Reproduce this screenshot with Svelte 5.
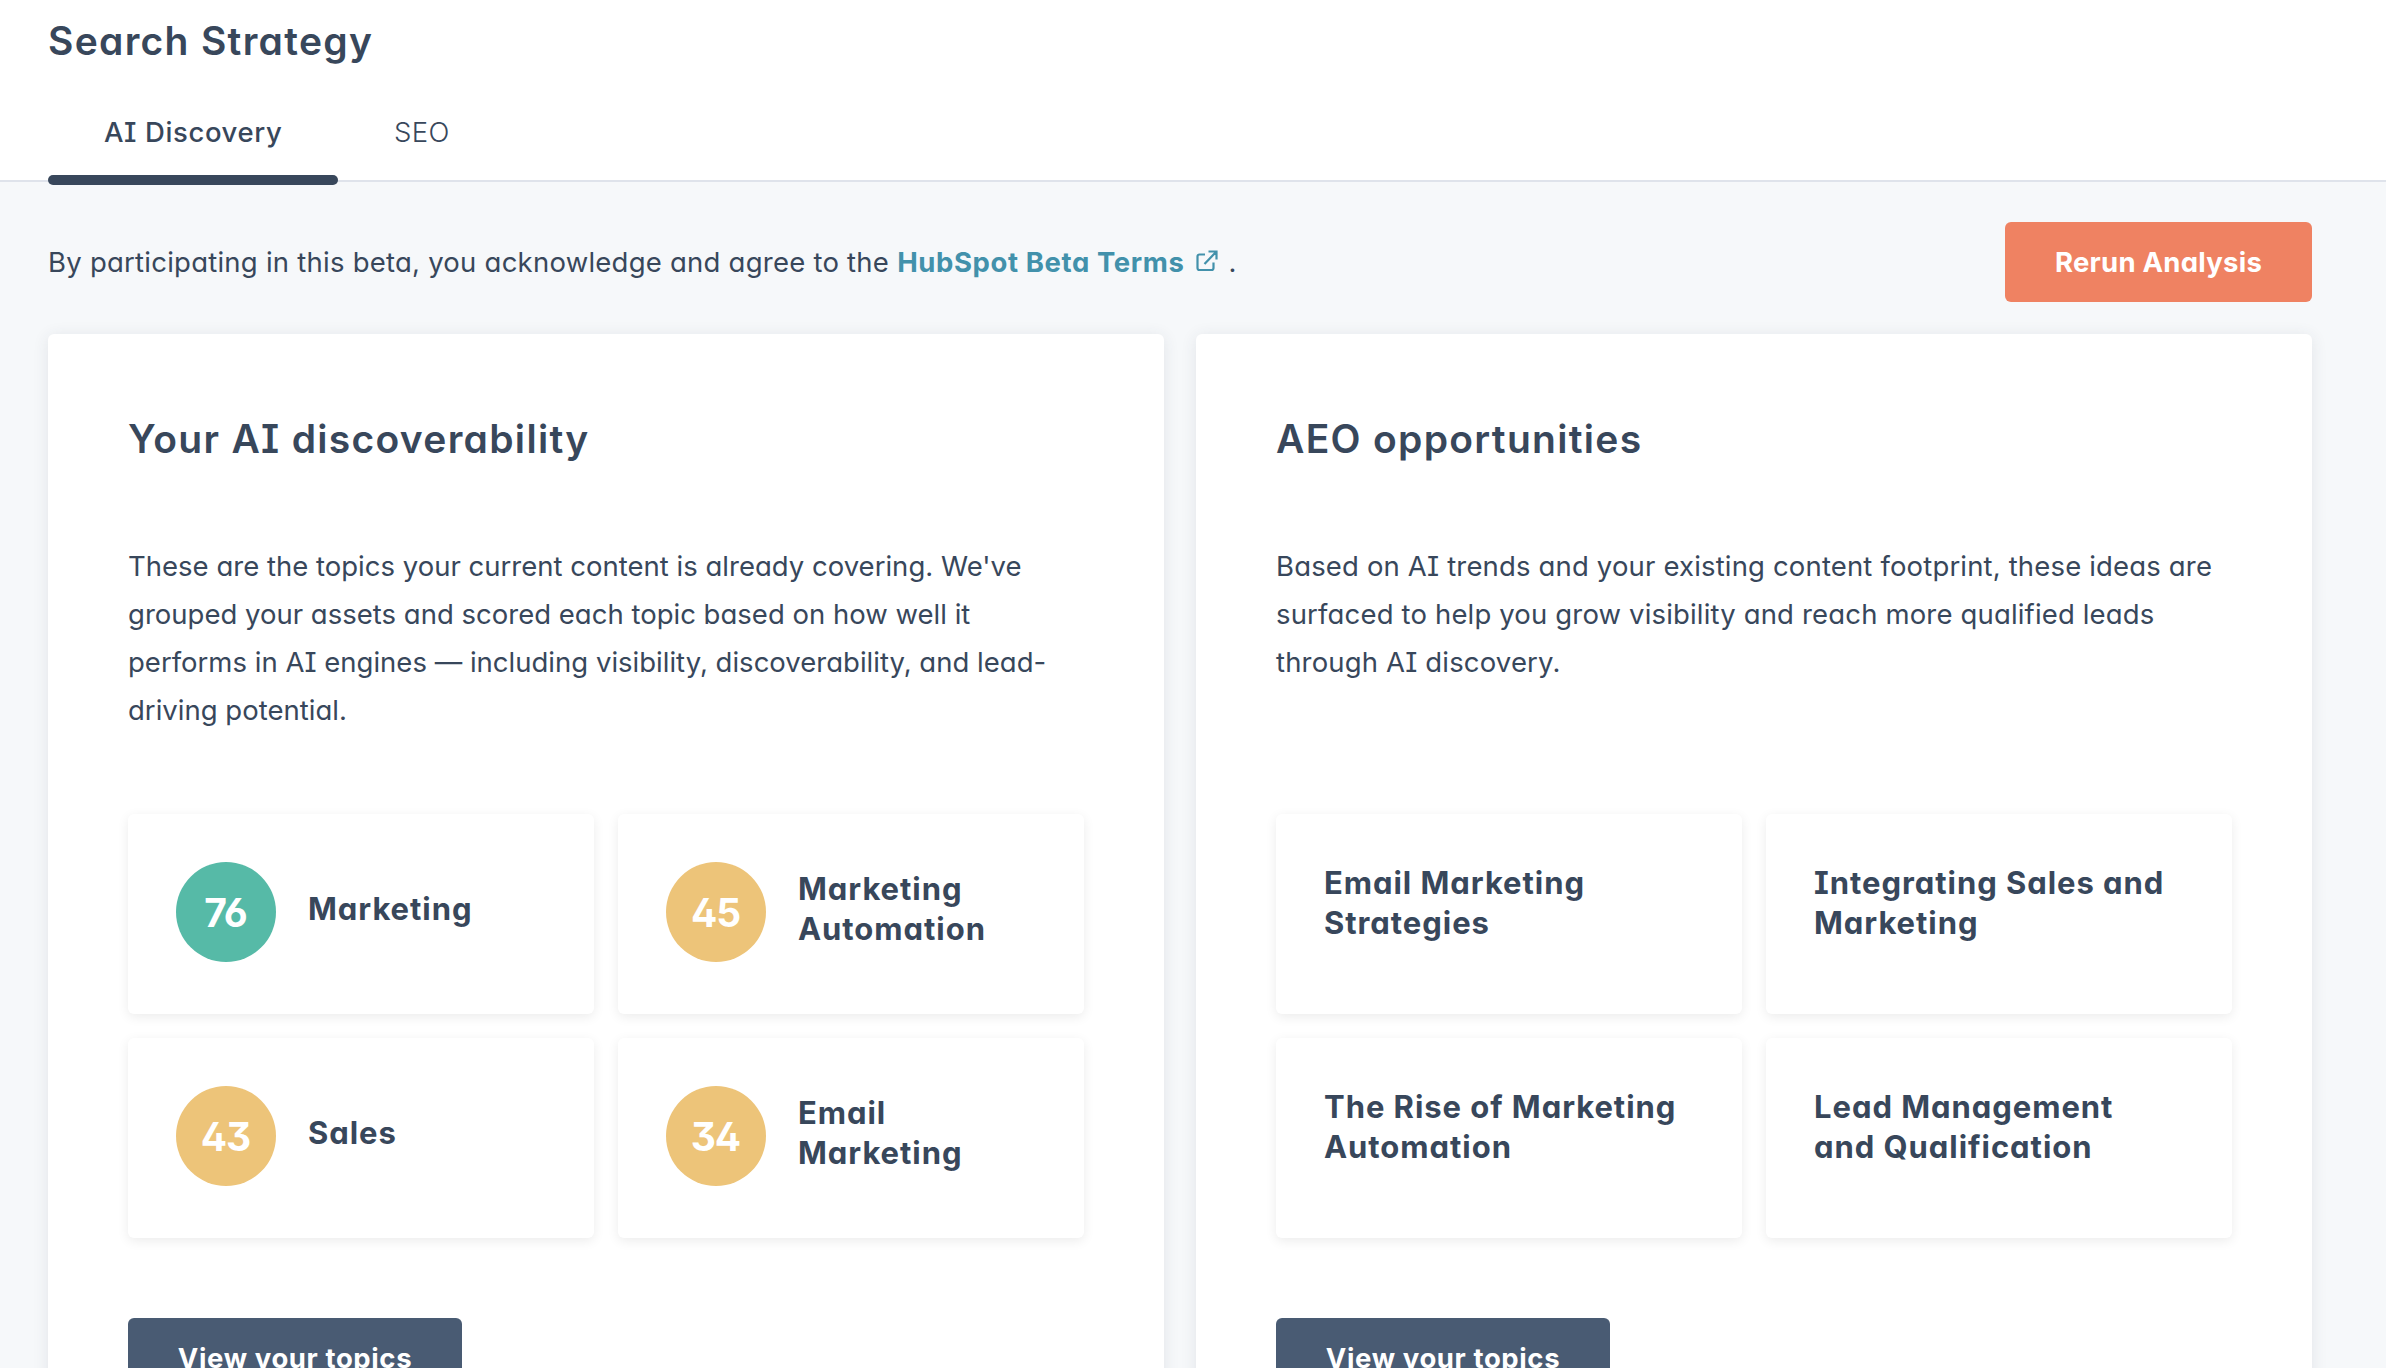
<script>
    let activeTab = $state("AI Discovery");

    const tabs = ["AI Discovery", "SEO"];

    const topics = [
        { name: "Marketing", score: 76 },
        { name: "Marketing Automation", score: 45 },
        { name: "Sales", score: 43 },
        { name: "Email Marketing", score: 34 },
    ];

    const opportunities = [
        "Email Marketing Strategies",
        "Integrating Sales and Marketing",
        "The Rise of Marketing Automation",
        "Lead Management and Qualification",
    ];
</script>

<div class="page">
    <header class="header">
        <h1>Search Strategy</h1>
        <nav class="tabs">
            {#each tabs as tab}
                <button class="tab" class:active={tab === activeTab} onclick={() => (activeTab = tab)}>{tab}</button>
            {/each}
        </nav>
    </header>

    <main class="main">
        <div class="toolbar">
            <p class="terms">
                <span>By participating in this beta, you acknowledge and agree to the</span>
                <a class="link" href="#terms">HubSpot Beta Terms
                    <svg class="external" viewBox="0 0 22 22" fill="none" stroke="currentColor" stroke-width="2.2">
                        <path d="M9 4.500H3.500A2 2 0 0 0 1.500 6.500V18A2 2 0 0 0 3.500 20H15.500A2 2 0 0 0 17.500 18V12.500" />
                        <path d="M12.500 1.500H20.500V9.500M20 2L8.500 14" />
                    </svg>
                </a>
                <span>.</span>
            </p>
            <button class="button primary">Rerun Analysis</button>
        </div>

        <div class="panels">
            <section class="panel">
                <h2>Your AI discoverability</h2>
                <p class="description">
                    These are the topics your current content is already covering. We've grouped your assets and scored each topic based on how well it performs in AI engines — including visibility, discoverability, and lead-driving potential.
                </p>
                <div class="grid">
                    {#each topics as topic}
                        <div class="card">
                            <div class="score" class:good={topic.score > 50}>{topic.score}</div>
                            <h3>{topic.name}</h3>
                        </div>
                    {/each}
                </div>
                <button class="button secondary">View your topics</button>
            </section>

            <section class="panel">
                <h2>AEO opportunities</h2>
                <p class="description wide">
                    Based on AI trends and your existing content footprint, these ideas are surfaced to help you grow visibility and reach more qualified leads through AI discovery.
                </p>
                <div class="grid">
                    {#each opportunities as name}
                        <div class="card idea">
                            <h3>{name}</h3>
                        </div>
                    {/each}
                </div>
                <button class="button secondary">View your topics</button>
            </section>
        </div>
    </main>
</div>

<style>
    :global(body) {
        margin: 0;
        background: #f6f8fa;
    }

    .page {
        height: 1368px;
        overflow: hidden;
        color: #38475b;
        font-family: Inter, "Liberation Sans", sans-serif;
        /* round a and serif capital I */
        font-feature-settings: "cv11", "cv08", "ss01";
        font-size: 27.5px;
        font-weight: 400;
        line-height: 48px;
    }

    h1, h2, h3, p {
        margin: 0;
    }

    h1, h2 {
        font-size: 39px;
        font-weight: 600;
        line-height: 48px;
        letter-spacing: 1.3px;
    }

    h2 {
        padding-top: 1px;
        margin-bottom: -1px;
    }

    button {
        border: 0;
        font: inherit;
        font-feature-settings: inherit;
        color: inherit;
        cursor: pointer;
    }

    .header {
        padding: 17px 48px 0;
        background: #fff;
        border-bottom: 2px solid #dfe3eb;
    }

    .tabs {
        display: flex;
        height: 115px;
    }

    .tab {
        position: relative;
        padding: 24px 56px 5px;
        background: none;
        font-weight: 350;
        letter-spacing: 0.4px;
    }

    .tab.active {
        width: 290px;
        font-weight: 550;
        letter-spacing: 0.6px;
        white-space: nowrap;
    }

    .tab.active::after {
        content: "";
        position: absolute;
        left: 0;
        right: 0;
        bottom: -5px;
        height: 10px;
        border-radius: 5px;
        background: #38475b;
    }

    .main {
        padding: 40px 74px 0 48px;
    }

    .toolbar {
        display: flex;
        align-items: center;
        justify-content: space-between;
        height: 80px;
        margin-bottom: 32px;
    }

    .terms {
        display: flex;
        gap: 8px;
        letter-spacing: 0.24px;
    }

    .link {
        display: flex;
        align-items: center;
        color: #4291ab;
        font-weight: 650;
        letter-spacing: 0.6px;
        text-decoration: none;
    }

    .external {
        width: 22px;
        height: 22px;
        margin: 0 2px 2px 12px;
    }

    .button {
        height: 80px;
        padding: 0;
        border-radius: 6px;
        color: #fff;
        font-weight: 700;
    }

    .primary {
        width: 307px;
        background: #ef8262;
        letter-spacing: 0.25px;
    }

    .secondary {
        width: 334px;
        background: #495b73;
        letter-spacing: 0.6px;
    }

    .panels {
        display: grid;
        grid-template-columns: 1fr 1fr;
        gap: 32px;
    }

    .panel {
        height: 1120px;
        box-sizing: border-box;
        padding: 80px;
        border-radius: 6px;
        background: #fff;
        box-shadow: 0 2px 16px rgba(45, 62, 80, 0.1);
    }

    .description {
        min-height: 192px;
        margin: 80px 0;
        letter-spacing: 0.01px;
    }

    .description.wide {
        letter-spacing: 0.16px;
    }

    .grid {
        display: grid;
        grid-template-columns: 1fr 1fr;
        gap: 24px;
        margin-bottom: 80px;
    }

    .card {
        display: flex;
        align-items: flex-start;
        gap: 32px;
        height: 200px;
        box-sizing: border-box;
        padding: 48px;
        border-radius: 6px;
        background: #fff;
        box-shadow: 0 3px 12px rgba(0, 0, 0, 0.08);
    }

    .card h3 {
        align-self: center;
        padding-bottom: 11px;
        font-size: 31px;
        font-weight: 650;
        line-height: 40px;
        letter-spacing: 0.95px;
    }

    .card.idea {
        padding-right: 56px;
    }

    .card.idea h3 {
        align-self: flex-start;
        padding-top: 1px;
    }

    .score {
        flex: none;
        width: 100px;
        height: 100px;
        border-radius: 50%;
        background: #edc479;
        color: #fff;
        font-size: 39px;
        font-weight: 700;
        line-height: 101px;
        letter-spacing: -1.2px;
        text-indent: -1.2px;
        text-align: center;
    }

    .score.good {
        background: #56baa7;
    }
</style>
